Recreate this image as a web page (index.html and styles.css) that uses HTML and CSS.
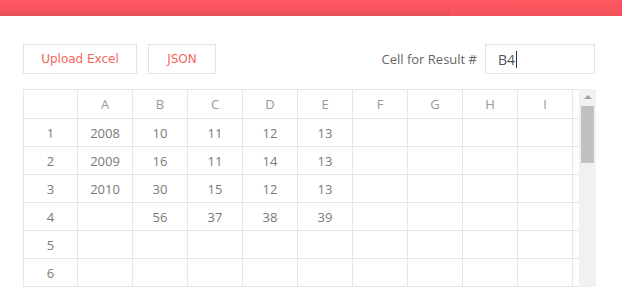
FILE: index.html
```html
<!DOCTYPE html>
<html lang="en">
<head>
  <meta charset="UTF-8">
  <title>Excel Formula</title>
  <link rel="stylesheet" href="styles.css">
</head>
<body>
  <div class="topbar"><div class="progress"></div></div>

  <div class="page">
    <div class="toolbar">
      <div class="actions">
        <button class="btn">Upload Excel</button>
        <button class="btn">JSON</button>
      </div>
      <div class="result">
        <label>Cell for Result #</label>
        <div class="field">B4<span class="caret"></span></div>
      </div>
    </div>

    <div class="sheet">
      <div class="grid" id="grid"></div>
      <div class="scrollbar">
        <div class="arrow"></div>
        <div class="thumb"></div>
      </div>
    </div>
  </div>

  <script>
    var cols = ["A", "B", "C", "D", "E", "F", "G", "H", "I", ""];
    var data = [
      ["2008", "10", "11", "12", "13"],
      ["2009", "16", "11", "14", "13"],
      ["2010", "30", "15", "12", "13"],
      ["", "56", "37", "38", "39"],
      [],
      []
    ];
    var grid = document.getElementById("grid");
    var html = '<div class="cell head"></div>';
    for (var c = 0; c < cols.length; c++) {
      html += '<div class="cell head">' + cols[c] + '</div>';
    }
    for (var r = 0; r < data.length; r++) {
      html += '<div class="cell rowhead">' + (r + 1) + '</div>';
      for (var c = 0; c < cols.length; c++) {
        html += '<div class="cell">' + (data[r][c] || "") + '</div>';
      }
    }
    grid.innerHTML = html;
  </script>
</body>
</html>
```

FILE: styles.css
```css
body {
  margin: 0;
  font-family: "Open Sans", Arial, sans-serif;
  background: #fff;
  overflow: hidden;
}
.topbar {
  height: 16px;
  background: linear-gradient(#ff5961, #f9555e 60%, #f0535b);
}
.progress {
  width: 450px;
  height: 16px;
  background: linear-gradient(#ff5961, #f9555e 55%, #e44d56);
}
.page {
  padding: 28px 27px 0 23px;
}
.toolbar {
  display: flex;
  justify-content: space-between;
  align-items: center;
  height: 30px;
}
.actions {
  display: flex;
  gap: 11px;
}
.btn {
  height: 30px;
  padding: 0 16px;
  border: 1px solid #dde3e8;
  background: #fff;
  color: #f3675d;
  font-family: "DejaVu Sans", Verdana, sans-serif;
  font-size: 12px;
}
.btn:first-child {
  width: 114px;
}
.btn:last-child {
  width: 68px;
}
.result {
  display: flex;
  align-items: center;
  gap: 8px;
}
.result label {
  color: #666;
  font-size: 13px;
}
.field {
  box-sizing: border-box;
  width: 110px;
  height: 30px;
  border: 1px solid #dde3e8;
  padding: 0 12px;
  display: flex;
  align-items: center;
  color: #555;
  font-size: 14px;
}
.caret {
  display: inline-block;
  width: 1px;
  height: 17px;
  background: #333;
  margin-left: 1px;
}
.sheet {
  margin-top: 15px;
  display: flex;
  height: 200px;
}
.grid {
  width: 555px;
  overflow: hidden;
  display: grid;
  grid-template-columns: 54px repeat(9, 55px) 40px;
  grid-template-rows: 29px;
  grid-auto-rows: 28px;
  border-top: 1px solid #e6e6e6;
  border-left: 1px solid #e6e6e6;
  align-content: start;
  flex-shrink: 0;
}
.cell {
  box-sizing: border-box;
  border-right: 1px solid #e6e6e6;
  border-bottom: 1px solid #e6e6e6;
  display: flex;
  align-items: center;
  justify-content: center;
  color: #7a7a7a;
  font-size: 13px;
}
.head {
  color: #999;
}
.scrollbar {
  width: 17px;
  background: #f1f1f1;
  position: relative;
  flex-shrink: 0;
}
.arrow {
  position: absolute;
  top: 6px;
  left: 5px;
  width: 0;
  height: 0;
  border-left: 4px solid transparent;
  border-right: 4px solid transparent;
  border-bottom: 4px solid #a3a3a3;
}
.thumb {
  position: absolute;
  top: 17px;
  left: 2px;
  width: 13px;
  height: 57px;
  background: #c1c1c1;
}
```
